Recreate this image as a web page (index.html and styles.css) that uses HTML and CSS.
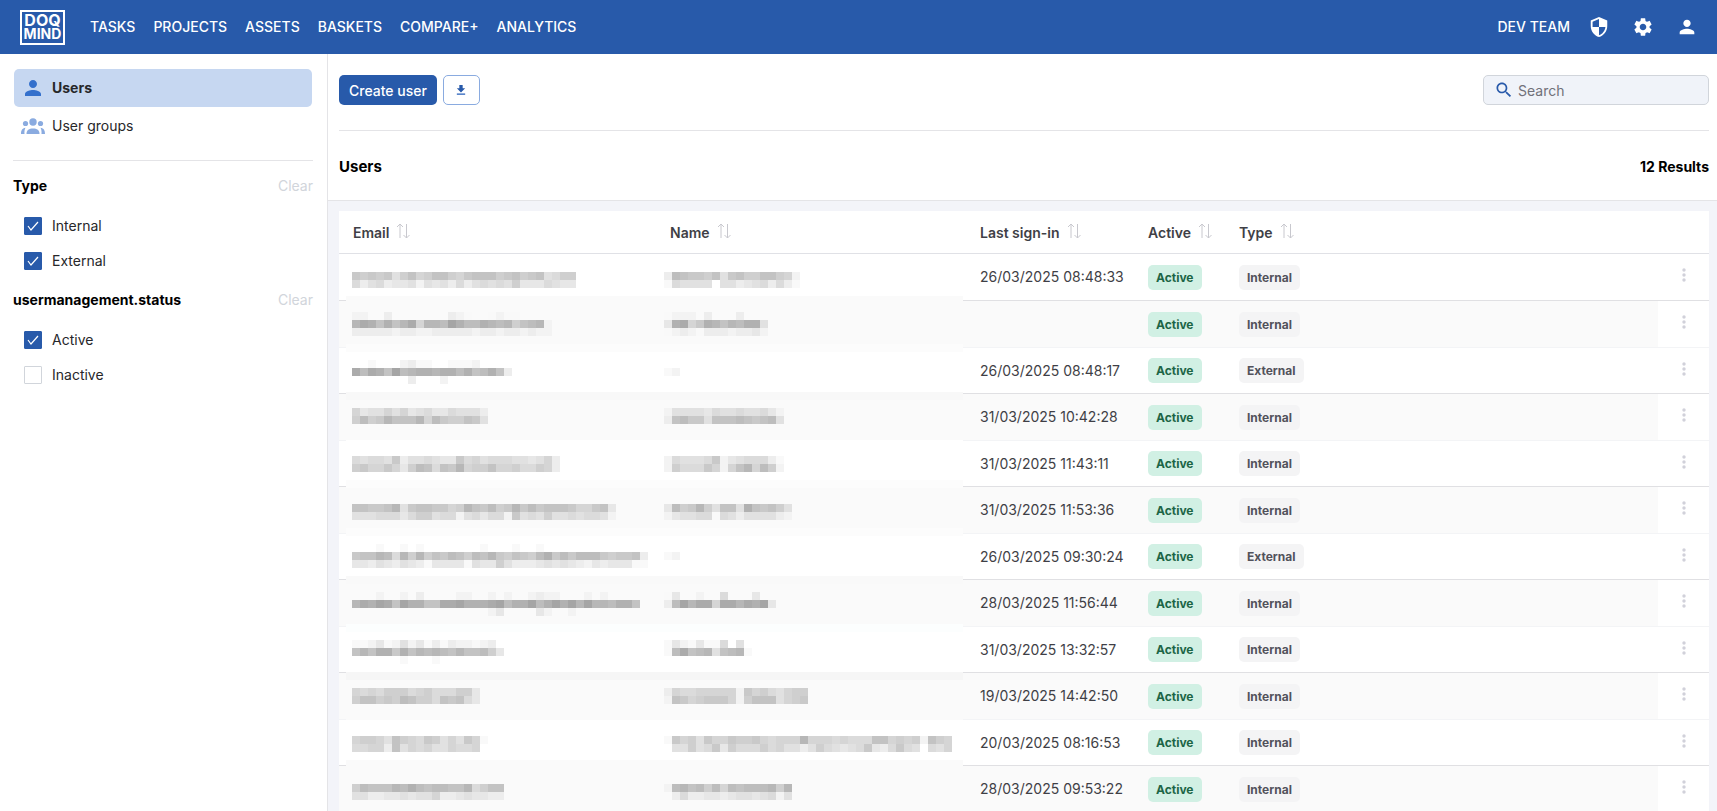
FILE: index.html
```
<!DOCTYPE html>
<html lang="en">
<head>
    <title>Users - DOQMIND</title>
    <meta charset="UTF-8">
    <meta name="viewport" content="width=device-width, initial-scale=1.0">
    <link rel="stylesheet" href="styles.css">
</head>
<body>
    <svg class="sprite" aria-hidden="true">
        <symbol id="icon-person" viewBox="0 0 24 24">
            <path d="M12 12c2.21 0 4-1.79 4-4s-1.79-4-4-4-4 1.79-4 4 1.79 4 4 4zm0 2c-2.67 0-8 1.34-8 4v2h16v-2c0-2.66-5.33-4-8-4z"/>
        </symbol>
        <symbol id="icon-group" viewBox="0 0 24 18">
            <circle cx="12" cy="5" r="3.7"/>
            <circle cx="4.5" cy="6.5" r="2.6"/>
            <circle cx="19.5" cy="6.5" r="2.6"/>
            <path d="M5.5 17c0-4 2.5-5.5 6.5-5.5s6.5 1.5 6.5 5.5z"/>
            <path d="M0 17c0-3.5 1-5.5 4.5-6.2C3.6 12.5 3.3 14.5 3.5 17zM24 17c0-3.5-1-5.5-4.5-6.2.9 1.7 1.2 3.7 1 6.2z"/>
        </symbol>
        <symbol id="icon-sort" viewBox="0 0 14 16">
            <path d="M4 15V1M1 4l3-3 3 3M10.5 1v14M7.5 12l3 3 3-3" fill="none" stroke="currentColor"/>
        </symbol>
        <symbol id="icon-more" viewBox="0 0 4 16">
            <circle cx="2" cy="3" r="1.7"/>
            <circle cx="2" cy="8" r="1.7"/>
            <circle cx="2" cy="13" r="1.7"/>
        </symbol>
    </svg>

    <header class="topbar">
        <a href="#" class="logo"><span class="logo-top">DOQ</span><span class="logo-bottom">MIND</span></a>
        <nav class="main-nav">
            <a href="#">TASKS</a>
            <a href="#">PROJECTS</a>
            <a href="#">ASSETS</a>
            <a href="#">BASKETS</a>
            <a href="#">COMPARE+</a>
            <a href="#">ANALYTICS</a>
        </nav>
        <div class="topbar-right">
            <a href="#">DEV TEAM</a>
            <button type="button" aria-label="Security">
                <svg viewBox="0 0 24 24"><path d="M12 1 3 5v6c0 5.55 3.84 10.74 9 12 5.16-1.26 9-6.45 9-12V5l-9-4zm0 10.99h7c-.53 4.12-3.28 7.79-7 8.94V12H5V6.3l7-3.11v8.8z"/></svg>
            </button>
            <button type="button" aria-label="Settings">
                <svg viewBox="0 0 24 24"><path d="M19.14 12.94c.04-.3.06-.61.06-.94 0-.32-.02-.64-.07-.94l2.03-1.58c.18-.14.23-.41.12-.61l-1.92-3.32c-.12-.22-.37-.29-.59-.22l-2.39.96c-.5-.38-1.03-.7-1.62-.94l-.36-2.54c-.04-.24-.24-.41-.48-.41h-3.84c-.24 0-.43.17-.47.41l-.36 2.54c-.59.24-1.13.57-1.62.94l-2.39-.96c-.22-.08-.47 0-.59.22L2.74 8.87c-.12.21-.08.47.12.61l2.03 1.58c-.05.3-.09.63-.09.94s.02.64.07.94l-2.03 1.58c-.18.14-.23.41-.12.61l1.92 3.32c.12.22.37.29.59.22l2.39-.96c.5.38 1.03.7 1.62.94l.36 2.54c.05.24.24.41.48.41h3.84c.24 0 .44-.17.47-.41l.36-2.54c.59-.24 1.13-.56 1.62-.94l2.39.96c.22.08.47 0 .59-.22l1.92-3.32c.12-.22.07-.47-.12-.61l-2.01-1.58zM12 15.6c-1.98 0-3.6-1.62-3.6-3.6s1.62-3.6 3.6-3.6 3.6 1.62 3.6 3.6-1.62 3.6-3.6 3.6z"/></svg>
            </button>
            <button type="button" aria-label="Account">
                <svg><use href="#icon-person"/></svg>
            </button>
        </div>
    </header>

    <div class="layout">
        <aside class="sidebar">
            <a href="#" class="side-link active"><svg class="icon-user"><use href="#icon-person"/></svg>Users</a>
            <a href="#" class="side-link"><svg class="icon-groups"><use href="#icon-group"/></svg>User groups</a>

            <div class="filters">
                <div class="filter-head">
                    <h2>Type</h2>
                    <button type="button" disabled>Clear</button>
                </div>
                <label class="check"><input type="checkbox" checked>Internal</label>
                <label class="check"><input type="checkbox" checked>External</label>
                <div class="filter-head">
                    <h2>usermanagement.status</h2>
                    <button type="button" disabled>Clear</button>
                </div>
                <label class="check"><input type="checkbox" checked>Active</label>
                <label class="check"><input type="checkbox">Inactive</label>
            </div>
        </aside>

        <main class="content">
            <div class="toolbar">
                <button type="button" class="btn-primary">Create user</button>
                <button type="button" class="btn-outline" aria-label="Download">
                    <svg viewBox="0 0 12 14"><path d="M4 1h4v4h3L6 10 1 5h3z"/><path class="tray" d="M1 11h10v2H1z"/></svg>
                </button>
                <div class="search">
                    <svg viewBox="0 0 24 24"><path d="M15.5 14h-.79l-.28-.27C15.41 12.59 16 11.11 16 9.5 16 5.91 13.09 3 9.5 3S3 5.91 3 9.5 5.91 16 9.5 16c1.61 0 3.09-.59 4.23-1.57l.27.28v.79l5 4.99L20.49 19l-4.99-5zm-6 0C7.01 14 5 11.99 5 9.5S7.01 5 9.5 5 14 7.01 14 9.5 11.99 14 9.5 14z"/></svg>
                    <input type="text" placeholder="Search" aria-label="Search">
                </div>
            </div>
            <div class="title-row">
                <h1>Users</h1>
                <span class="count">12 Results</span>
            </div>

            <div class="results">
                <div class="table-wrap">
                    <table>
                        <thead>
                            <tr>
                                <th class="col-email">Email<svg><use href="#icon-sort"/></svg></th>
                                <th class="col-name">Name<svg><use href="#icon-sort"/></svg></th>
                                <th class="col-date">Last sign-in<svg><use href="#icon-sort"/></svg></th>
                                <th class="col-active">Active<svg><use href="#icon-sort"/></svg></th>
                                <th>Type<svg><use href="#icon-sort"/></svg></th>
                                <th class="col-menu"></th>
                            </tr>
                        </thead>
                        <tbody id="rows"></tbody>
                    </table>
                    <svg class="mask" id="mask" aria-hidden="true"></svg>
                </div>
            </div>
        </main>
    </div>

    <script src="app.js"></script>
</body>
</html>
```
FILE: styles.css
```
* {
    margin: 0;
    padding: 0;
    box-sizing: border-box;
}

body {
    height: 100vh;
    display: flex;
    flex-direction: column;
    overflow: hidden;
    font-family: Inter, 'Liberation Sans', sans-serif;
    font-size: 14px;
    line-height: 20px;
    color: #27272a;
    background: #fff;
}

a {
    color: inherit;
    text-decoration: none;
}

button,
input {
    font: inherit;
}

button {
    border: none;
    background: none;
    cursor: pointer;
}

svg {
    fill: currentColor;
}

.sprite {
    display: none;
}

/* Top bar */
.topbar {
    flex: none;
    height: 54px;
    padding: 0 19px 0 20px;
    display: flex;
    align-items: center;
    background: #285aaa;
    color: #fff;
    font-weight: 500;
}

.logo {
    width: 45px;
    height: 35px;
    margin-right: 25px;
    border: 2px solid #fff;
    display: flex;
    flex-direction: column;
    align-items: center;
    justify-content: center;
    font-weight: 700;
    line-height: 14px;
}

.logo-top {
    font-size: 16px;
}

.logo-bottom {
    font-size: 14px;
}

.main-nav {
    display: flex;
    gap: 18px;
}

.topbar-right {
    margin-left: auto;
    display: flex;
    align-items: center;
    gap: 22px;
}

.topbar-right a {
    margin-right: -4px;
}

.topbar-right button {
    width: 22px;
    height: 22px;
    color: #fff;
}

.topbar-right svg {
    display: block;
    width: 22px;
    height: 22px;
}

.layout {
    flex: 1;
    min-height: 0;
    display: flex;
}

/* Sidebar */
.sidebar {
    flex: none;
    width: 328px;
    padding: 15px 15px 15px 14px;
    border-right: 1px solid #e4e4e7;
}

.side-link {
    height: 38px;
    padding-left: 38px;
    display: flex;
    align-items: center;
    position: relative;
    border-radius: 5px;
}

.side-link.active {
    background: #c6d7f1;
    font-weight: 700;
}

.side-link svg {
    position: absolute;
    left: 7px;
    width: 24px;
    height: 24px;
    color: #8aabe0;
}

.side-link .icon-user {
    color: #3470cc;
}

.side-link .icon-groups {
    height: 18px;
}

.filters {
    margin: 15px -1px 0;
    border-top: 1px solid #e4e4e7;
    padding-top: 3px;
}

.filter-head {
    height: 44px;
    display: flex;
    align-items: center;
    justify-content: space-between;
}

.filter-head h2 {
    font-size: 14px;
    font-weight: 700;
    color: #000;
}

.filter-head button {
    color: #d1d5db;
}

.check {
    height: 35px;
    padding-left: 11px;
    display: flex;
    align-items: center;
    gap: 10px;
}

.check input {
    appearance: none;
    width: 18px;
    height: 18px;
    border: 1px solid #d1d5db;
    border-radius: 1px;
    background: #fff;
}

.check input:checked {
    border-color: #285aaa;
    background: #285aaa url("data:image/svg+xml,%3Csvg xmlns='http://www.w3.org/2000/svg' viewBox='0 0 16 16'%3E%3Cpath d='M3 8l3 4 7-8' fill='none' stroke='white' stroke-width='1.2'/%3E%3C/svg%3E") center / 16px no-repeat;
}

/* Content */
.content {
    flex: 1;
    min-width: 0;
    display: flex;
    flex-direction: column;
}

.toolbar {
    flex: none;
    height: 77px;
    margin: 0 8px 0 11px;
    padding-top: 21px;
    display: flex;
    align-items: flex-start;
    border-bottom: 1px solid #e4e4e7;
}

.toolbar button {
    height: 30px;
    border-radius: 5px;
}

.btn-primary {
    padding: 2px 10px 0;
    background: #285aaa;
    color: #fff;
    font-weight: 500;
}

.btn-outline {
    width: 37px;
    margin-left: 6px;
    display: flex;
    align-items: center;
    justify-content: center;
    border: 1px solid #8aabe0;
    color: #285aaa;
}

.btn-outline svg {
    width: 10px;
    height: 12px;
}

.btn-outline .tray {
    fill: #5b86cb;
}

.search {
    width: 226px;
    height: 30px;
    margin-left: auto;
    padding: 0 10px;
    display: flex;
    align-items: center;
    gap: 4px;
    border: 1px solid #d1d5db;
    border-radius: 5px;
    background: #f0f3f9;
    color: #285aaa;
}

.search svg {
    flex: none;
    width: 20px;
    height: 20px;
}

.search input {
    width: 100%;
    padding-top: 2px;
    border: none;
    outline: none;
    background: none;
}

.search input::placeholder {
    color: #71717a;
}

.title-row {
    flex: none;
    height: 70px;
    padding: 2px 8px 0 11px;
    display: flex;
    align-items: center;
    justify-content: space-between;
    border-bottom: 1px solid #e4e4e7;
    color: #000;
    font-weight: 700;
}

.title-row h1 {
    font-size: 15px;
    font-weight: 700;
}

.results {
    flex: 1;
    min-height: 0;
    padding: 10px 8px 0 11px;
    overflow: hidden;
    background: #f3f4f9;
}

.table-wrap {
    position: relative;
    background: #fff;
}

table {
    width: 100%;
    table-layout: fixed;
    border-collapse: separate;
    border-spacing: 0;
    color: #3f3f46;
}

th {
    height: 43px;
    padding: 2px 0 0 14px;
    text-align: left;
    font-weight: 600;
    border-bottom: 1px solid #e0e1e6;
    white-space: nowrap;
}

th svg {
    width: 14px;
    height: 16px;
    margin-left: 7px;
    vertical-align: -1px;
    color: #c8c8ce;
}

.col-email {
    width: 317px;
}

.col-name {
    width: 310px;
}

.col-date {
    width: 168px;
}

.col-active {
    width: 91px;
}

.col-menu {
    width: 51px;
}

td {
    height: 46px;
    padding-left: 14px;
    border-bottom: 1px solid #e0e0e3;
}

tbody tr:first-child td {
    height: 47px;
}

tr:nth-child(even) td {
    height: 47px;
    background: #fafafa;
    border-bottom-color: #f3f4f6;
}

tr:nth-child(even) td.menu {
    background: #fff;
}

.badge {
    display: block;
    width: fit-content;
    height: 25px;
    padding: 0 8px;
    border-radius: 5px;
    background: #f4f4f5;
    color: #52525b;
    font-size: 12px;
    font-weight: 700;
    line-height: 25px;
}

.badge.on {
    background: #d1f0e4;
    color: #1c6546;
}

td.menu {
    padding: 0;
    text-align: center;
}

.menu button {
    display: block;
    width: 24px;
    height: 24px;
    margin: 0 auto 4px;
    color: #d1d1da;
}

.menu svg {
    display: block;
    width: 4px;
    height: 16px;
    margin: 4px 10px;
}

/* Mosaic that hides personal data */
.mask {
    position: absolute;
    top: 45px;
    left: 7px;
    width: 617px;
    height: 555px;
    pointer-events: none;
}
```
FILE: app.js
```
const rows = [
    ['26/03/2025 08:48:33', 'Internal'],
    ['', 'Internal'],
    ['26/03/2025 08:48:17', 'External'],
    ['31/03/2025 10:42:28', 'Internal'],
    ['31/03/2025 11:43:11', 'Internal'],
    ['31/03/2025 11:53:36', 'Internal'],
    ['26/03/2025 09:30:24', 'External'],
    ['28/03/2025 11:56:44', 'Internal'],
    ['31/03/2025 13:32:57', 'Internal'],
    ['19/03/2025 14:42:50', 'Internal'],
    ['20/03/2025 08:16:53', 'Internal'],
    ['28/03/2025 09:53:22', 'Internal']
];

document.getElementById('rows').innerHTML = rows.map(([date, type]) => `
    <tr>
        <td></td>
        <td></td>
        <td>${date}</td>
        <td><span class="badge on">Active</span></td>
        <td><span class="badge">${type}</span></td>
        <td class="menu"><button type="button" aria-label="More"><svg><use href="#icon-more"/></svg></button></td>
    </tr>`).join('');

// Mosaic background: [first line, number of lines, colour], one line is 8px
const bands = [
    [0, 5, '#ffffff'], [5, 6, '#fafafa'], [11, 1, '#fcfcfc'],
    [12, 5, '#ffffff'], [17, 1, '#f8f8f8'], [18, 5, '#fafafa'],
    [23, 5, '#ffffff'], [28, 1, '#fcfcfc'], [29, 5, '#fafafa'], [34, 1, '#fcfcfc'],
    [35, 5, '#ffffff'], [40, 1, '#f9f9f9'], [41, 5, '#fafafa'], [46, 1, '#fcfefe'],
    [47, 5, '#ffffff'], [52, 1, '#f6f6f6'], [53, 5, '#fafafa'],
    [58, 5, '#ffffff'], [63, 7, '#fafafa']
];

// Mosaic cells: [line, email, name], each hex digit is one darkness level
const cells = [
    [2, '9898958a78aa879aaa89a89a5688', '3ba998a59a88aa872'],
    [3, '6356344525453635656584446544', '16555505534563631'],
    [7, '220030000000321001211', '12220300030'],
    [8, 'cedadace7ccbfdbbdcbc8abc2', '4de79dcacbdd5'],
    [9, '3333323322333332332332322', '1232133323342'],
    [13, '0010002311001112', ''],
    [14, 'ebedafbcddcddbdabda3', '12'],
    [15, '000000030002', ''],
    [19, '74557574564465553', '255554655655642'],
    [20, '8b89caaac7b988a95', '3ab995aaaba9ab5'],
    [25, '65665935565449675666554573', '265556924566631'],
    [26, '89779748ba6a9c788a77866873', '286669727ac7b82'],
    [31, 'aa99ac59aa9978ca9b89c9b9aaa9779a4', '4b89c85aa5da9a85'],
    [32, '555666468856625646629565855656652', '2455661653555532'],
    [36, '000100101000000010001001', ''],
    [37, '9aacb6c8c8a9ba8bac98a98bd9b9bbb9899a3', '12'],
    [38, '4435435431444415448533345454324344411', ''],
    [42, '00020020300002200202002322000202', '140020060004'],
    [43, 'cedfeafddaaeefdddefbddfbdfdfcfccbdda', '3bfcee7eecedf4'],
    [44, '0000000000000000024000042002', ''],
    [48, '112412524131322123', '1421411605'],
    [49, 'acadd9dacbcbacaab84', '1beabc5abc1'],
    [50, '00000010001', ''],
    [54, '7676888678666884', '376677777297865788'],
    [55, '8aa898ba886a9a64', '2a978999728aaa5789'],
    [60, '78875a87698575971', '19785977988976777c77767666aa78782a87'],
    [61, '66773a5767557667', '055856948666867553586545694369650657'],
    [66, '8baaacbdbabbaac68aa', '2bcab8b7babbbc8c'],
    [67, '5533445455733454433', '0363344345545625']
];

let shapes = bands.map(([line, count, fill]) =>
    `<rect x="0" y="${line * 8}" width="617" height="${count * 8}" fill="${fill}"/>`).join('');

function drawCells(levels, x, y) {
    [...levels].forEach((level, i) => {
        const value = parseInt(level, 16);
        if (value) {
            const grey = 255 - value * 6;
            shapes += `<rect x="${x + i * 8}" y="${y}" width="8" height="8" fill="rgb(${grey},${grey},${grey})"/>`;
        }
    });
}

cells.forEach(([line, email, name]) => {
    drawCells(email, 6, line * 8);
    drawCells(name, 318, line * 8);
});

document.getElementById('mask').innerHTML = shapes;
```
